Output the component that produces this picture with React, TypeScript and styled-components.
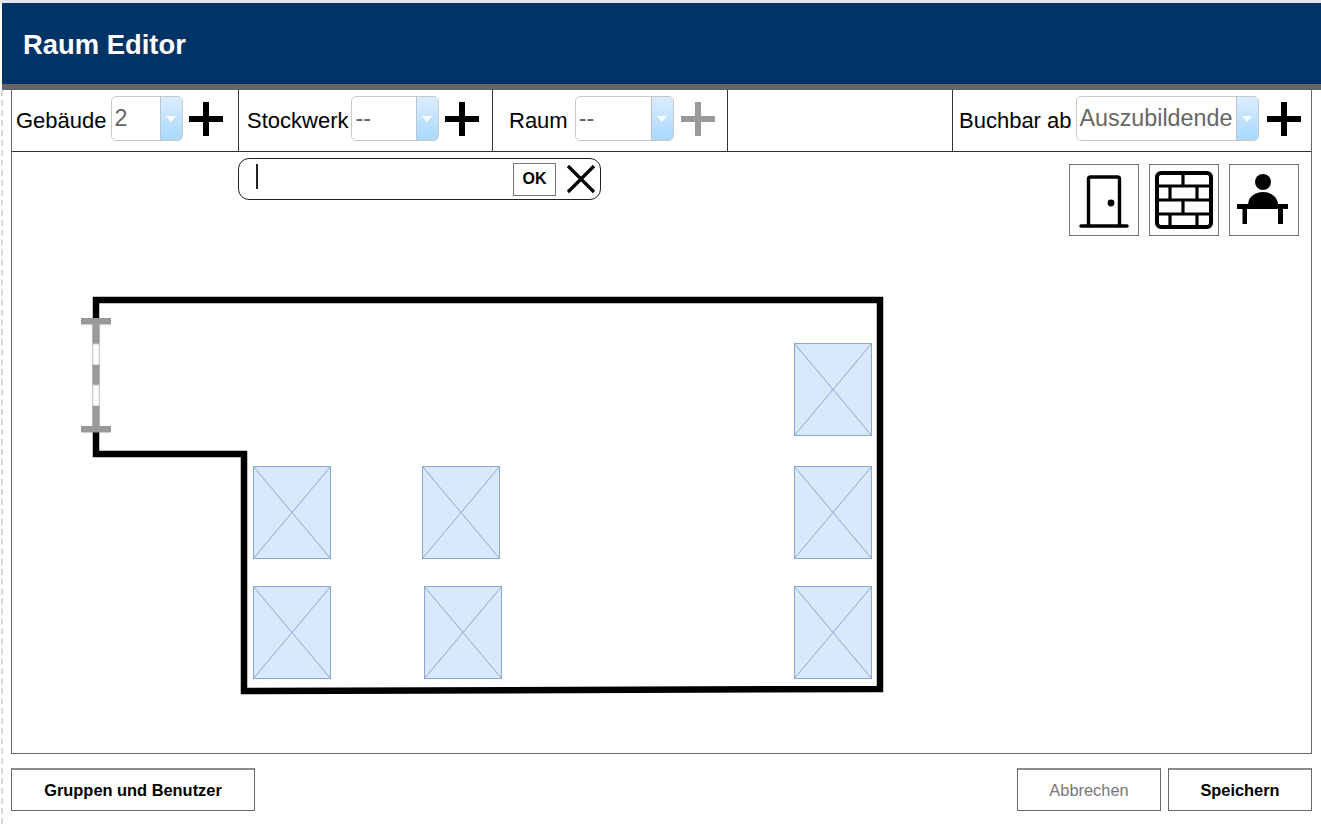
import styled, { createGlobalStyle } from 'styled-components';

const GlobalStyle = createGlobalStyle`
    html, body {
        margin: 0;
        padding: 0;
        background: #fff;
    }

    body {
        font-family: 'Liberation Sans', Arial, sans-serif;
        color: #000;
    }
`;

const desks = [
    { x: 253, y: 466 },
    { x: 422, y: 466 },
    { x: 253, y: 586 },
    { x: 424, y: 586 },
    { x: 794, y: 343 },
    { x: 794, y: 466 },
    { x: 794, y: 586 },
];

const windowPanes = [
    { y: 324, h: 20, fill: '#999', edge: 'none' },
    { y: 344, h: 21, fill: '#fff', edge: '#c4c4c4' },
    { y: 365, h: 20, fill: '#999', edge: 'none' },
    { y: 385, h: 21, fill: '#fff', edge: '#c4c4c4' },
    { y: 406, h: 20, fill: '#999', edge: 'none' },
];

const Plus = ({ color = '#000' }: { color?: string }) => (
    <PlusIcon viewBox="0 0 34 34">
        <path d="M17 0V34M0 17H34" stroke={color} strokeWidth="6" />
    </PlusIcon>
);

const DoorIcon = () => (
    <ToolIcon viewBox="0 0 68 70">
        <path
            d="M18.5 61V14Q18.5 12 20.5 12H47.5Q49.5 12 49.5 14V61"
            fill="none"
            stroke="#000"
            strokeWidth="3.4"
        />
        <path d="M11 61H57" stroke="#000" strokeWidth="3.5" strokeLinecap="round" />
        <circle cx="41" cy="38" r="3.4" fill="#000" />
    </ToolIcon>
);

const WallIcon = () => (
    <ToolIcon viewBox="0 0 68 70">
        <rect x="7" y="8" width="54" height="54" rx="4" fill="none" stroke="#000" strokeWidth="4" />
        <path
            d="M7 21H61M7 35H61M7 49H61M33 8V21M20 21V35M47 21V35M33 35V49M20 49V62M47 49V62"
            fill="none"
            stroke="#000"
            strokeWidth="3.2"
        />
    </ToolIcon>
);

const PersonIcon = () => (
    <ToolIcon viewBox="0 0 68 70">
        <circle cx="33" cy="17" r="8" fill="#000" />
        <path d="M18 40C18 32 25 27 33 27C41 27 48 32 48 40Z" fill="#000" />
        <path d="M7 39H58V44H53V59H48V44H17V59H12.5V44H7Z" fill="#000" />
    </ToolIcon>
);

const App = () => {
    return (
        <Page>
            <GlobalStyle />
            <Header>
                <Title>Raum Editor</Title>
            </Header>
            <Frame>
                <Toolbar>
                    <Section $width={227} $pad={4}>
                        <Label>Gebäude</Label>
                        <Select $width={72} $left={4} $right={6}>
                            <SelectValue>2</SelectValue>
                            <SelectArrow />
                        </Select>
                        <Plus />
                    </Section>
                    <Section $width={254} $pad={8}>
                        <Label>Stockwerk</Label>
                        <Select $width={88} $left={3} $right={6}>
                            <SelectValue>--</SelectValue>
                            <SelectArrow />
                        </Select>
                        <Plus />
                    </Section>
                    <Section $width={235} $pad={16}>
                        <Label>Raum</Label>
                        <Select $width={99} $left={7} $right={7}>
                            <SelectValue>--</SelectValue>
                            <SelectArrow />
                        </Select>
                        <Plus color="#999" />
                    </Section>
                    <Section $width={225} $pad={0} />
                    <LastSection $pad={6}>
                        <Label>Buchbar ab</Label>
                        <Select $width={183} $left={4} $right={8}>
                            <SelectValue>Auszubildende</SelectValue>
                            <SelectArrow />
                        </Select>
                        <Plus />
                    </LastSection>
                </Toolbar>
                <Canvas>
                    <PlanDrawing viewBox="12 152 1299 600">
                        <path
                            d="M96 300H880V689L244 691V454H96Z"
                            fill="none"
                            stroke="#000"
                            strokeWidth="6.5"
                        />
                        {windowPanes.map((pane) => (
                            <rect
                                key={pane.y}
                                x="92.75"
                                y={pane.y}
                                width="6.5"
                                height={pane.h}
                                fill={pane.fill}
                                stroke={pane.edge}
                            />
                        ))}
                        <rect x="81" y="318" width="30" height="6.5" fill="#999" />
                        <rect x="81" y="426" width="30" height="6.5" fill="#999" />
                        {desks.map((desk) => (
                            <g key={`${desk.x}-${desk.y}`}>
                                <rect
                                    x={desk.x + 0.5}
                                    y={desk.y + 0.5}
                                    width="77"
                                    height="92"
                                    fill="#dae8fc"
                                    stroke="#8aa6d3"
                                />
                                <path
                                    d={`M${desk.x} ${desk.y}l78 93M${desk.x + 78} ${desk.y}l-78 93`}
                                    stroke="#8aa6d3"
                                    fill="none"
                                />
                            </g>
                        ))}
                    </PlanDrawing>
                    <CanvasTop>
                        <SearchBox>
                            <Caret />
                            <OkButton>OK</OkButton>
                            <CloseIcon viewBox="0 0 30 30">
                                <path d="M2 2L28 28M28 2L2 28" stroke="#000" strokeWidth="3.2" />
                            </CloseIcon>
                        </SearchBox>
                        <Tools>
                            <ToolButton>
                                <DoorIcon />
                            </ToolButton>
                            <ToolButton>
                                <WallIcon />
                            </ToolButton>
                            <ToolButton>
                                <PersonIcon />
                            </ToolButton>
                        </Tools>
                    </CanvasTop>
                </Canvas>
            </Frame>
            <Footer>
                <FooterButton $width={244} $bold>
                    Gruppen und Benutzer
                </FooterButton>
                <FooterActions>
                    <FooterButton $width={144} $muted>
                        Abbrechen
                    </FooterButton>
                    <FooterButton $width={144} $bold>
                        Speichern
                    </FooterButton>
                </FooterActions>
            </Footer>
        </Page>
    );
};

const Page = styled.div`
    position: relative;
    width: 1321px;
    height: 829px;
    overflow: hidden;
    padding-top: 3px;
    box-sizing: border-box;
    background: #fff;

    &::before {
        content: '';
        position: absolute;
        top: 0;
        left: 0;
        right: 0;
        height: 3px;
        background: #e4e6e8;
    }

    &::after {
        content: '';
        position: absolute;
        top: 90px;
        bottom: 5px;
        left: 1px;
        border-left: 2px dashed #d8d8d8;
    }
`;

const Header = styled.header`
    display: flex;
    align-items: center;
    height: 81px;
    margin-left: 2px;
    padding: 2px 0 0 21px;
    box-sizing: content-box;
    background: #003366;
    border-bottom: 6px solid #666;
    height: 79px;
`;

const Title = styled.h1`
    margin: 0;
    font-size: 27.4px;
    font-weight: 700;
    color: #fff;
`;

const Frame = styled.main`
    width: 1301px;
    height: 664px;
    margin-left: 11px;
    box-sizing: border-box;
    display: flex;
    flex-direction: column;
    border: 1px solid #666;
    border-top: 0;
`;

const Toolbar = styled.div`
    display: flex;
    height: 62px;
    flex: none;
    box-sizing: border-box;
    border-bottom: 1px solid #333;
`;

const Section = styled.div<{ $width: number; $pad: number }>`
    display: flex;
    align-items: center;
    width: ${(p) => p.$width}px;
    flex: none;
    box-sizing: border-box;
    padding-left: ${(p) => p.$pad}px;
    border-right: 1px solid #333;
`;

const LastSection = styled.div<{ $pad: number }>`
    display: flex;
    align-items: center;
    flex: 1;
    padding-left: ${(p) => p.$pad}px;
`;

const Label = styled.span`
    font-size: 22px;
    line-height: 26px;
    white-space: nowrap;
`;

const Select = styled.div<{ $width: number; $left: number; $right: number }>`
    display: flex;
    width: ${(p) => p.$width}px;
    height: 45px;
    margin: -4px ${(p) => p.$right}px 0 ${(p) => p.$left}px;
    box-sizing: border-box;
    flex: none;
    overflow: hidden;
    background: #fff;
    border: 1px solid #c8c8c8;
    border-radius: 5px;
`;

const SelectValue = styled.span`
    flex: 1;
    padding: 7px 0 0 3px;
    font-size: 23.3px;
    line-height: 28px;
    color: #666;
    white-space: nowrap;
`;

const SelectArrow = styled.span`
    position: relative;
    width: 21px;
    flex: none;
    background: linear-gradient(#dcecff, #a9d9ff);
    border-left: 1px solid #b8c4d0;

    &::after {
        content: '';
        position: absolute;
        top: 19px;
        left: 5px;
        border-left: 5px solid transparent;
        border-right: 5px solid transparent;
        border-top: 6px solid #fff;
    }
`;

const PlusIcon = styled.svg`
    display: block;
    width: 34px;
    height: 34px;
    flex: none;
    margin-top: -4px;
`;

const Canvas = styled.div`
    position: relative;
    flex: 1;
`;

const PlanDrawing = styled.svg`
    position: absolute;
    top: 0;
    left: 0;
    width: 1299px;
    height: 600px;
`;

const CanvasTop = styled.div`
    position: relative;
    display: flex;
    justify-content: space-between;
    align-items: flex-start;
    padding: 6px 12px 0 226px;
`;

const SearchBox = styled.div`
    display: flex;
    align-items: center;
    width: 363px;
    height: 42px;
    box-sizing: border-box;
    padding: 0 4px 0 17px;
    background: #fff;
    border: 1px solid #222;
    border-radius: 11px;
`;

const Caret = styled.span`
    width: 1.5px;
    height: 25px;
    margin-top: -5px;
    background: #222;
`;

const OkButton = styled.span`
    display: flex;
    align-items: center;
    justify-content: center;
    width: 43px;
    height: 33px;
    margin-left: auto;
    box-sizing: border-box;
    font-size: 16px;
    font-weight: 700;
    border: 1px solid #777;
`;

const CloseIcon = styled.svg`
    display: block;
    width: 30px;
    height: 30px;
    margin-left: 10px;
`;

const Tools = styled.div`
    display: flex;
    gap: 10px;
    margin-top: 6px;
`;

const ToolButton = styled.div`
    width: 70px;
    height: 72px;
    box-sizing: border-box;
    background: #fff;
    border: 1px solid #777;
`;

const ToolIcon = styled.svg`
    display: block;
    width: 68px;
    height: 70px;
`;

const Footer = styled.footer`
    display: flex;
    justify-content: space-between;
    width: 1301px;
    margin: 14px 0 0 11px;
`;

const FooterActions = styled.div`
    display: flex;
    gap: 7px;
`;

const FooterButton = styled.div<{ $width: number; $bold?: boolean; $muted?: boolean }>`
    display: flex;
    align-items: center;
    justify-content: center;
    width: ${(p) => p.$width}px;
    height: 43px;
    box-sizing: border-box;
    font-size: 16.4px;
    font-weight: ${(p) => (p.$bold ? 700 : 400)};
    color: ${(p) => (p.$muted ? '#777' : '#000')};
    background: #fff;
    border: 1px solid #666;
    border-top: 2px solid #8c8c8c;
`;

export default App;
